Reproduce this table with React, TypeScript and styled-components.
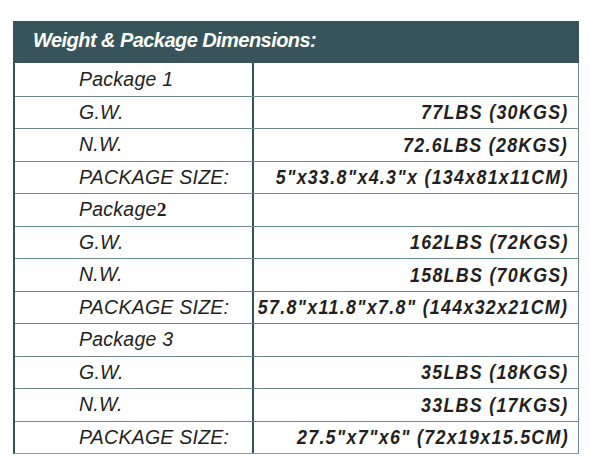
import styled, { createGlobalStyle } from 'styled-components'

type Row = {
  label: string,
  serifNum?: string,
  value?: string
}

const rows: Row[] = [
  { label: 'Package 1' },
  { label: 'G.W.', value: '77LBS (30KGS)' },
  { label: 'N.W.', value: '72.6LBS (28KGS)' },
  { label: 'PACKAGE SIZE:', value: '5"x33.8"x4.3"x (134x81x11CM)' },
  { label: 'Package', serifNum: '2' },
  { label: 'G.W.', value: '162LBS (72KGS)' },
  { label: 'N.W.', value: '158LBS (70KGS)' },
  { label: 'PACKAGE SIZE:', value: '57.8"x11.8"x7.8" (144x32x21CM)' },
  { label: 'Package 3' },
  { label: 'G.W.', value: '35LBS (18KGS)' },
  { label: 'N.W.', value: '33LBS (17KGS)' },
  { label: 'PACKAGE SIZE:', value: '27.5"x7"x6" (72x19x15.5CM)' }
]

export default function App () {
  return (
    <>
      <GlobalStyle />
      <Page>
        <Sheet>
          <Header>Weight &amp; Package Dimensions:</Header>
          {rows.map((row, i) => (
            <SpecRow key={i}>
              <Label>
                {row.label}
                {row.serifNum && <SerifTwo>{row.serifNum}</SerifTwo>}
              </Label>
              <Value>
                {row.value && <ValueText>{row.value}</ValueText>}
              </Value>
            </SpecRow>
          ))}
        </Sheet>
      </Page>
    </>
  )
}

const GlobalStyle = createGlobalStyle`
  body {
    margin: 0;
    background: #ffffff;
    font-family: "Liberation Sans", Arial, sans-serif;
  }
`

const Page = styled.div`
  width: 590px;
  height: 467px;
  padding: 21px 0 0 13px;
  box-sizing: border-box;
`

const Sheet = styled.div`
  width: 566px;
  border-left: 2px solid #33535a;
  border-right: 1px solid #6f8a8e;
  border-bottom: 1.5px solid #8a9ea1;
  box-sizing: border-box;
`

const Header = styled.div`
  height: 42px;
  margin-left: -2px;
  margin-right: -1px;
  background: #36545a;
  color: #ffffff;
  font-size: 20px;
  font-weight: 700;
  font-style: italic;
  letter-spacing: -0.55px;
  display: flex;
  align-items: center;
  padding: 0 0 3px 20px;
  box-sizing: border-box;
`

const SpecRow = styled.div`
  display: grid;
  grid-template-columns: 239px 1fr;
  height: 32.5px;
  box-sizing: border-box;

  & + & {
    border-top: 1.5px solid #6e898d;
  }
`

const Label = styled.div`
  display: flex;
  align-items: center;
  padding-left: 64px;
  border-right: 2px solid #33535a;
  color: #231f20;
  font-size: 19.5px;
  font-style: italic;
  letter-spacing: 0.25px;
  white-space: nowrap;
`

const SerifTwo = styled.span`
  font-family: "Liberation Serif", "Times New Roman", serif;
  font-style: normal;
  font-weight: 700;
  letter-spacing: 0;
`

const Value = styled.div`
  display: flex;
  align-items: center;
  justify-content: flex-end;
  padding-right: 11px;
  white-space: nowrap;
  overflow: visible;
`

const ValueText = styled.span`
  display: inline-block;
  flex-shrink: 0;
  margin-left: -80px;
  margin-right: -1.5px;
  color: #231f20;
  font-size: 21px;
  font-weight: 700;
  font-style: italic;
  letter-spacing: 1.5px;
  transform: scaleX(0.85);
  transform-origin: right center;
`
